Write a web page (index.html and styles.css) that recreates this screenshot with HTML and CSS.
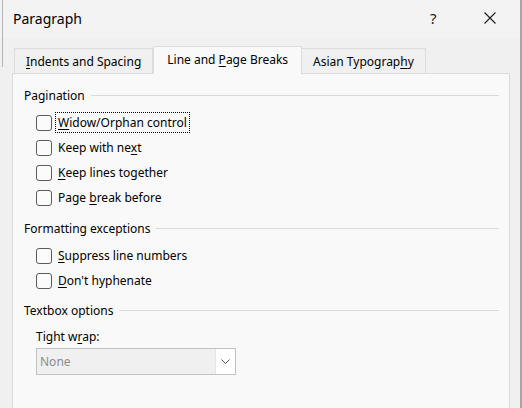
FILE: index.html
```html
<!DOCTYPE html>
<html lang="en">
<head>
  <meta charset="UTF-8" />
  <title>Paragraph</title>
  <link rel="stylesheet" href="styles.css">
</head>
<body>
  <div class="dialog">
    <div class="titlebar">
      <span class="title">Paragraph</span>
      <span class="help">?</span>
      <span class="close">
        <svg width="12" height="12" viewBox="0 0 12 12"><path d="M0.5 0.5 L11.5 11.5 M11.5 0.5 L0.5 11.5" stroke="#1a1a1a" stroke-width="1.1" fill="none"/></svg>
      </span>
    </div>

    <div class="tabs">
      <div class="tab"><span><u>I</u>ndents and Spacing</span></div>
      <div class="tab active"><span>Line and <u>P</u>age Breaks</span></div>
      <div class="tab"><span>Asian Typograp<u>h</u>y</span></div>
    </div>

    <div class="panel">
      <div class="group-title"><span>Pagination</span></div>
      <div class="options">
        <div class="option"><span class="box"></span><span class="label focused"><u>W</u>idow/Orphan control</span></div>
        <div class="option"><span class="box"></span><span class="label">Keep with ne<u>x</u>t</span></div>
        <div class="option"><span class="box"></span><span class="label"><u>K</u>eep lines together</span></div>
        <div class="option"><span class="box"></span><span class="label">Page <u>b</u>reak before</span></div>
      </div>

      <div class="group-title formatting"><span>Formatting exceptions</span></div>
      <div class="options">
        <div class="option"><span class="box"></span><span class="label"><u>S</u>uppress line numbers</span></div>
        <div class="option"><span class="box"></span><span class="label"><u>D</u>on't hyphenate</span></div>
      </div>

      <div class="group-title textbox"><span>Textbox options</span></div>
      <div class="field-label">Tight w<u>r</u>ap:</div>
      <div class="select">
        <span class="select-value">None</span>
        <span class="select-button">
          <svg width="9" height="5" viewBox="0 0 9 5"><path d="M0.5 0.5 L4.5 4.5 L8.5 0.5" stroke="#555" stroke-width="1" fill="none"/></svg>
        </span>
      </div>
    </div>
  </div>
</body>
</html>
```

FILE: styles.css
```css
* {
  box-sizing: border-box;
  margin: 0;
  padding: 0;
}
body {
  background-color: #f0f0f0;
  font-family: "Noto Sans", "Open Sans", sans-serif;
  font-size: 12px;
  color: #000;
  width: 522px;
  height: 408px;
  overflow: hidden;
  position: relative;
}
body::before {
  content: "";
  position: absolute;
  left: 2px;
  top: 0;
  width: 1px;
  height: 67px;
  background: #b4b4b4;
}
u {
  text-decoration: underline;
  text-underline-offset: 2px;
}
.dialog {
  width: 522px;
  height: 408px;
  border-right: 2px solid #a5a5a5;
}
.titlebar {
  display: flex;
  align-items: center;
  height: 38px;
  background: #f3f3f3;
}
.title {
  font-size: 14px;
  padding-left: 13px;
  flex: 1;
  margin-top: -2px;
}
.help {
  font-size: 15px;
  width: 20px;
  margin-right: 34px;
  margin-top: -2px;
  color: #1a1a1a;
}
.close {
  display: flex;
  margin-right: 24px;
  margin-top: -3px;
}
.tabs {
  display: flex;
  align-items: flex-end;
  padding-left: 14px;
  height: 35px;
  position: relative;
  z-index: 1;
}
.tab {
  height: 25px;
  padding: 0 11px;
  display: flex;
  align-items: center;
  border: 1px solid #dcdcdc;
  border-bottom: none;
  background: #f0f0f0;
}
.tab + .tab {
  border-left: none;
}
.tab.active {
  height: 28px;
  background: #f9f9f9;
  border-left: 1px solid #dcdcdc;
  padding: 0 13px 3px;
  margin-bottom: -1px;
}
.panel {
  margin-left: 12px;
  width: 498px;
  height: 340px;
  background: #f9f9f9;
  border: 1px solid #dcdcdc;
  padding: 13px 10px 0 11px;
}
.group-title {
  display: flex;
  align-items: center;
  height: 16px;
  margin-bottom: 7px;
}
.group-title::after {
  content: "";
  flex: 1;
  border-top: 1px solid #dadada;
  margin-left: 6px;
}
.group-title.formatting {
  margin-top: 10px;
}
.group-title.textbox {
  margin-top: 9px;
  margin-bottom: 0;
}
.options {
  padding-left: 12px;
}
.option {
  display: flex;
  align-items: center;
  height: 25px;
}
.box {
  width: 16px;
  height: 16px;
  border: 1px solid #5c5c5c;
  border-radius: 3px;
  background: #fbfbfb;
  margin-right: 3px;
}
.label {
  padding: 1px 2px;
  border: 1px dotted transparent;
}
.label.focused {
  border-color: #000;
}
.field-label {
  margin-top: 11px;
  padding-left: 12px;
  height: 16px;
  line-height: 16px;
}
.select {
  margin: 3px 0 0 12px;
  width: 200px;
  height: 27px;
  display: flex;
  border: 1px solid #c2c2c2;
  background: #f0f0f0;
}
.select-value {
  flex: 1;
  padding-left: 3px;
  line-height: 25px;
  color: #8c8c8c;
}
.select-button {
  width: 20px;
  background: #fff;
  display: flex;
  align-items: center;
  justify-content: center;
  border-left: 1px solid #e4e4e4;
}
```
